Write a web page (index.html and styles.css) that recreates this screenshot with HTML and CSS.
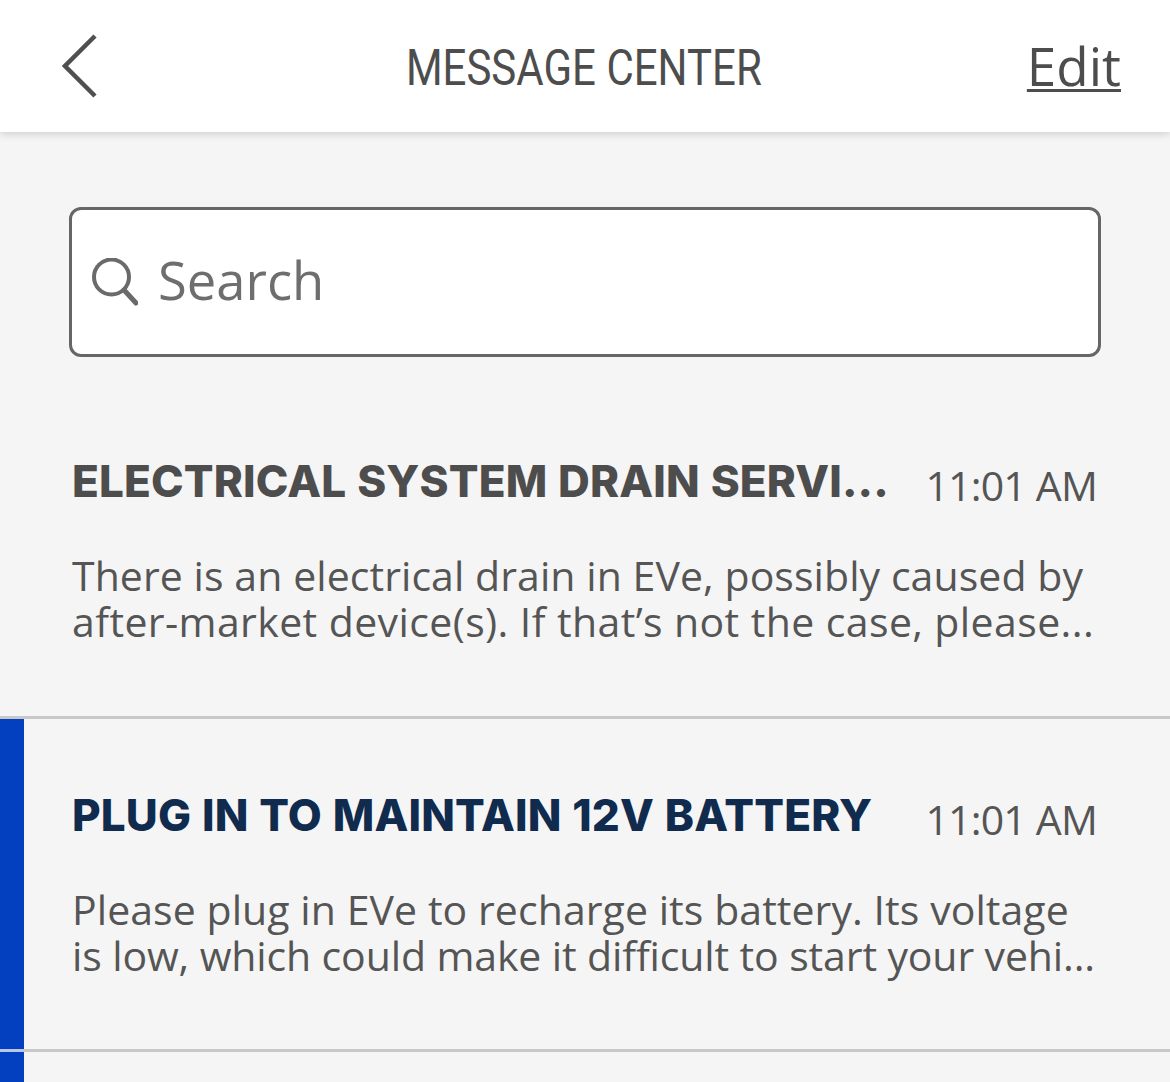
FILE: index.html
```html
<!DOCTYPE html>
<html lang="en">
<head>
<meta charset="utf-8">
<title>Message Center</title>
<link rel="stylesheet" href="styles.css">
</head>
<body>
<header class="topbar">
  <svg class="back" width="36" height="64" viewBox="0 0 36 64"><path d="M33 2 L3 32 L33 62" fill="none" stroke="#4f4f4f" stroke-width="4.5"/></svg>
  <h1 class="title">MESSAGE CENTER</h1>
  <a class="edit">Edit</a>
</header>
<main class="content">
  <div class="search">
    <svg class="search-icon" width="46" height="48" viewBox="0 0 46 48"><circle cx="19.500" cy="19" r="17.500" fill="none" stroke="#6a6a6a" stroke-width="4"/><path d="M32 32 L44 45" stroke="#6a6a6a" stroke-width="5" stroke-linecap="round" fill="none"/></svg>
    <span class="search-text">Search</span>
  </div>
  <section class="message">
    <div class="msg-head"><span class="msg-title">ELECTRICAL SYSTEM DRAIN SERVI...</span><span class="msg-time">11:01 AM</span></div>
    <p class="msg-body"><span class="line">There is an electrical drain in EVe, possibly caused by</span><span class="line wide">after-market device(s). If that’s not the case, please...</span></p>
  </section>
  <section class="message unread">
    <div class="msg-head"><span class="msg-title">PLUG IN TO MAINTAIN 12V BATTERY</span><span class="msg-time">11:01 AM</span></div>
    <p class="msg-body"><span class="line">Please plug in EVe to recharge its battery. Its voltage</span><span class="line tight">is low, which could make it difficult to start your vehi...</span></p>
  </section>
  <section class="message unread stub"></section>
</main>
</body>
</html>
```
FILE: styles.css
```css
html, body { margin: 0; padding: 0; }
body { width: 1170px; height: 1082px; overflow: hidden; background: #f5f5f5; font-family: "Open Sans", "Liberation Sans", sans-serif; color: #555; }
.topbar { height: 132px; background: #fff; display: grid; grid-template-columns: 1fr auto 1fr; align-items: center; padding: 0 49px 0 62px; box-shadow: 0 2px 8px rgba(0,0,0,.16); position: relative; }
.back { display: block; }
.title { margin: 0; font-family: Roboto, "Open Sans", sans-serif; font-size: 50px; font-weight: 400; letter-spacing: 0; color: #4d4d4d; transform: translate(-8px, 2px) scaleX(.84); white-space: nowrap; }
.edit { justify-self: end; font-size: 53px; padding-bottom: 2px; color: #4d4d4d; text-decoration: underline; text-decoration-thickness: 3px; text-underline-offset: 3px; }
.search { margin: 75px 69px 28px; height: 150px; box-sizing: border-box; border: 3px solid #666; border-radius: 12px; background: #fff; display: flex; align-items: center; gap: 20px; padding-left: 20px; }
.search-icon { display: block; }
.search-text { font-size: 52.500px; color: #6e6e6e; line-height: 1; padding-bottom: 3px; }
.message { height: 333px; box-sizing: border-box; padding: 0 73px 0 72px; border-bottom: 3px solid #c8c8c8; position: relative; }
section:first-of-type { height: 334px; }
.msg-head { display: flex; justify-content: space-between; padding-top: 66px; height: 60px; }
.msg-title { font-family: Inter, "Open Sans", sans-serif; font-size: 44px; line-height: 60px; font-weight: 800; letter-spacing: .15px; word-spacing: 1px; color: #4d4d4d; white-space: nowrap; }
.msg-time { font-size: 41px; line-height: 60px; padding-top: 4px; color: #555; letter-spacing: -.8px; }
.msg-body { margin: 41px 0 0; font-size: 41px; line-height: 46px; letter-spacing: .07px; color: #555; white-space: nowrap; }
.line { display: block; }
.wide { letter-spacing: .4px; }
.tight { letter-spacing: -.12px; }
.unread { box-shadow: inset 24px 0 0 #0340bf; }
.unread::after { content: ""; position: absolute; left: 0; bottom: -3px; width: 24px; height: 3px; background: #b9c6e6; }
.unread .msg-title { color: #102b4e; }
.stub { height: 40px; border: 0; }
.stub::after { display: none; }
```
